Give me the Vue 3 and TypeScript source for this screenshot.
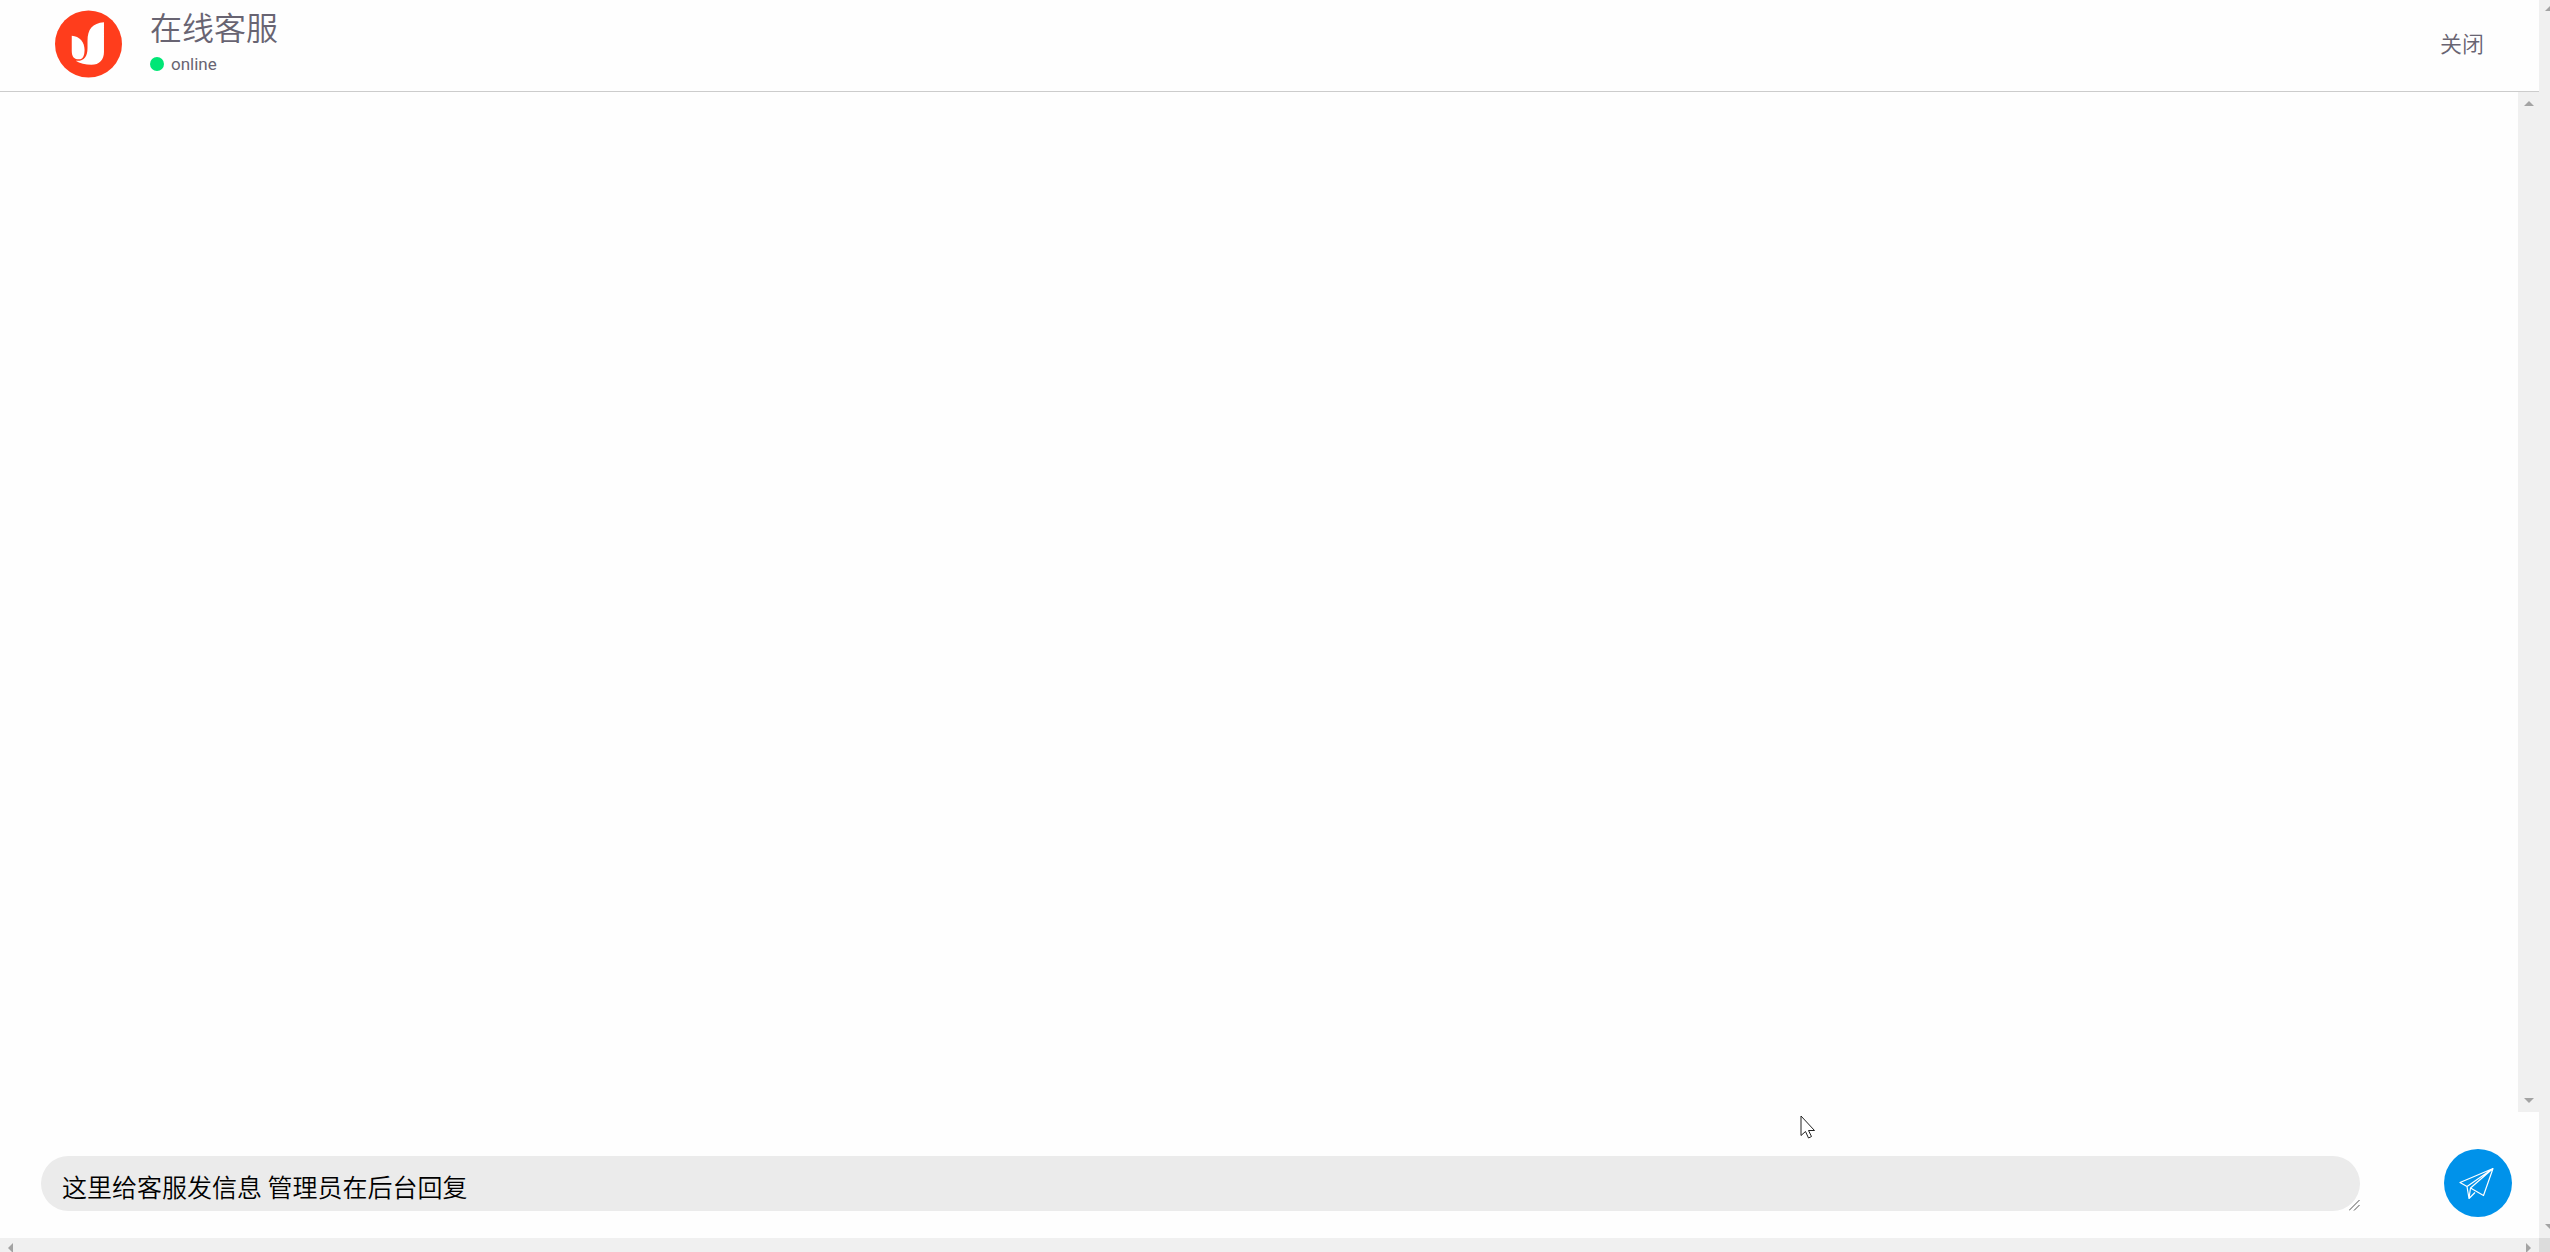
<script setup lang="ts">
import { ref } from 'vue'

const title = '在线客服'
const status = 'online'
const message = ref('这里给客服发信息 管理员在后台回复')
</script>

<template>
  <div class="window">
    <div class="view">
      <main class="chat">
        <header class="header">
          <svg class="logo" viewBox="0 0 68 68" aria-hidden="true">
            <circle cx="34" cy="34" r="34" fill="#ff3d1c" />
            <path d="M49.7 12V42C49.7 50 45 55 37 55C31 55 25 54 21 51C29 52 33 47 33 38V31C33 19 38 13 49.7 12Z" fill="#fff" />
            <path d="M17 25.5C25 26 30 32 30 40C30 46 28 49.5 24.5 49.5C19.5 49.5 17 47 17 41Z" fill="#fff" />
          </svg>
          <div class="agent">
            <h1 class="name">{{ title }}</h1>
            <p class="status"><span class="dot"></span>{{ status }}</p>
          </div>
          <button class="close" type="button">关闭</button>
        </header>

        <section class="messages" aria-label="消息">
          <div class="track">
            <svg width="10" height="6" viewBox="0 0 10 6"><path d="M0 6L5 1L10 6Z" /></svg>
            <svg width="10" height="6" viewBox="0 0 10 6"><path d="M0 0L5 5L10 0Z" /></svg>
          </div>
        </section>

        <form class="composer" @submit.prevent>
          <div class="field">
            <textarea v-model="message" class="input" rows="1" aria-label="消息内容"></textarea>
            <svg class="grip" width="11" height="11" viewBox="0 0 11 11">
              <path d="M0 10.5L10.5 0M5 10.5L10.5 5" fill="none" stroke="#555" />
            </svg>
          </div>
          <button class="send" type="submit" aria-label="发送">
            <svg viewBox="0 0 68 68" fill="none" stroke="#fff" stroke-width="1.2" stroke-linejoin="round">
              <path d="M49 19.5L16 33.5L23 37.5ZM23 37.5L25 49.5L26.5 39L49 19.5M25 49.5L31 43.5M26.5 39L39.5 46.5L49 19.5" />
            </svg>
          </button>
        </form>
      </main>
      <div class="outer-track">
        <svg width="10" height="6" viewBox="0 0 10 6"><path d="M0 6L5 1L10 6Z" /></svg>
        <svg width="10" height="6" viewBox="0 0 10 6"><path d="M0 0L5 5L10 0Z" /></svg>
      </div>
    </div>
    <div class="bottom">
      <div class="bottom-track">
        <svg width="6" height="10" viewBox="0 0 6 10"><path d="M5 0L0 5L5 10Z" /></svg>
        <svg width="6" height="10" viewBox="0 0 6 10"><path d="M0 0L5 5L0 10Z" /></svg>
      </div>
      <div class="corner"></div>
    </div>
    <svg class="cursor" width="16" height="25" viewBox="0 0 16 25">
      <path d="M1 1V20.5L5.5 16.5L8.5 23L11.5 21.5L8.5 15.5H14.5Z" fill="#fff" stroke="#222" />
    </svg>
  </div>
</template>

<style>
body {
  margin: 0;
}
</style>

<style scoped>
.window {
  position: relative;
  display: flex;
  flex-direction: column;
  height: 100vh;
  overflow: hidden;
  background: #fefefe;
  color: #686472;
  font-family: Roboto, "Noto Sans CJK SC", sans-serif;
}

.view {
  display: flex;
  flex: 1;
  min-height: 0;
}

.chat {
  display: flex;
  flex: 1;
  flex-direction: column;
  min-width: 0;
}

.header {
  display: flex;
  align-items: flex-start;
  box-sizing: border-box;
  height: 92px;
  padding: 10px 55px 0;
  border-bottom: 1px solid #ccc;
}

.logo {
  width: 67px;
  height: 68px;
}

.agent {
  flex: 1;
  margin-left: 28px;
}

.name {
  margin: 0;
  font-size: 32px;
  font-weight: 350;
  line-height: 38px;
}

.status {
  display: flex;
  align-items: center;
  gap: 7px;
  margin: 6px 0 0;
  font-size: 17px;
  line-height: 20px;
}

.dot {
  width: 14px;
  height: 14px;
  border-radius: 50%;
  background: #00e676;
}

.close {
  height: 70px;
  padding: 0;
  border: 0;
  background: none;
  color: inherit;
  font: 350 22px/32px Roboto, "Noto Sans CJK SC", sans-serif;
}

.messages {
  display: flex;
  flex: 1;
  justify-content: flex-end;
  min-height: 0;
}

.track,
.outer-track {
  display: flex;
  flex-direction: column;
  align-items: center;
  justify-content: space-between;
  box-sizing: border-box;
  width: 21px;
  padding: 8px 0;
  background: #f0f0f0;
}

.outer-track {
  align-items: flex-start;
  width: 11px;
  padding: 5px 0 8px 6px;
  overflow: hidden;
}

.track svg,
.outer-track svg,
.bottom-track svg {
  flex: none;
  fill: #a3a3a3;
}

.composer {
  display: flex;
  align-items: center;
  justify-content: space-between;
  gap: 84px;
  box-sizing: border-box;
  height: 126px;
  padding: 16px 27px 0 41px;
}

.field {
  position: relative;
  flex: 1;
  height: 55px;
}

.input {
  display: block;
  box-sizing: border-box;
  width: 100%;
  height: 55px;
  padding: 12px 21px 0;
  border: 0;
  border-radius: 28px;
  outline: 0;
  background: #ebebeb;
  color: #000;
  font: 350 25px/36px "Noto Sans CJK SC", sans-serif;
  resize: none;
  overflow: hidden;
}

.grip {
  position: absolute;
  right: 0;
  bottom: 0;
}

.send {
  width: 68px;
  height: 68px;
  padding: 0;
  border: 0;
  border-radius: 50%;
  background: #0092ea;
}

.send svg {
  display: block;
  width: 100%;
  height: 100%;
}

.bottom {
  display: flex;
  height: 14px;
  overflow: hidden;
}

.bottom-track {
  display: flex;
  flex: 1;
  align-items: flex-start;
  justify-content: space-between;
  padding: 5px 7px 0 8px;
  background: #f0f0f0;
}

.corner {
  width: 11px;
  background: #dcdcdc;
}

.cursor {
  position: absolute;
  top: 1115px;
  left: 1800px;
}
</style>
